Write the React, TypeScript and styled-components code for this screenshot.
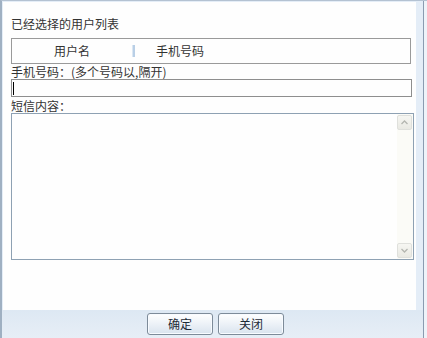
import React from "react";
import styled, { createGlobalStyle } from "styled-components";

const Global = createGlobalStyle`
  html, body { margin: 0; padding: 0; background: #ffffff; }
  body { font-family: "Noto Sans CJK SC", "Noto Sans", sans-serif; font-size: 12px; color: #333; }
`;

const Frame = styled.div`
  width: 427px;
  height: 338px;
  box-sizing: border-box;
  background: #e4edf7;
  border-top: 1px solid #b4c2d2;
  border-left: 2px solid #9fb0c2;
  box-shadow: inset -3px 0 0 #eef3f9, inset -4px 0 0 #8a9bb0;
  display: flex;
  flex-direction: column;
`;

const Content = styled.div`
  margin: 1px 11px 0 1px;
  height: 308px;
  background: #fefefe;
  box-sizing: border-box;
  padding: 14px 0 0 8px;
  display: flex;
  flex-direction: column;
`;

const Label = styled.div<{ $h?: number }>`
  height: ${(p) => p.$h ?? 15}px;
  line-height: ${(p) => p.$h ?? 15}px;
  font-size: 12px;
  color: #333;
  white-space: nowrap;
`;

const ListBox = styled.div`
  margin-top: 6px;
  width: 400px;
  height: 26px;
  box-sizing: border-box;
  border: 1px solid #9a9a9a;
  display: flex;
  align-items: center;
`;

const HeadCell = styled.div<{ $w: number; $align: string; $pad?: number }>`
  width: ${(p) => p.$w}px;
  text-align: ${(p) => p.$align};
  padding-left: ${(p) => p.$pad ?? 0}px;
  box-sizing: border-box;
  line-height: 16px;
  color: #333;
`;

const Sep = styled.div`
  width: 2px;
  height: 12px;
  background: #b9cfe6;
  border-left: 1px solid #dbe7f3;
`;

const Input = styled.div`
  width: 401px;
  height: 18px;
  box-sizing: border-box;
  border: 1px solid #8e8e8e;
  padding: 2px 0 0 1px;
  margin-bottom: 1px;
`;

const Caret = styled.div`
  width: 1px;
  height: 13px;
  background: #000;
`;

const TextBox = styled.div`
  width: 403px;
  height: 147px;
  box-sizing: border-box;
  border: 1px solid #8ea1b3;
  display: flex;
`;

const Area = styled.textarea`
  flex: 1;
  border: none;
  outline: none;
  resize: none;
  overflow: hidden;
  background: #fefefe;
  font-family: inherit;
  font-size: 12px;
  padding: 2px;
`;

const Scroll = styled.div`
  width: 16px;
  background: #fbfbf7;
  display: flex;
  flex-direction: column;
  justify-content: space-between;
  padding: 1px 1px 1px 0;
  box-sizing: border-box;
`;

const ScrollBtn = styled.div`
  height: 15px;
  box-sizing: border-box;
  border: 1px solid #dfe0dc;
  border-radius: 2px;
  background: linear-gradient(#f6f6f2, #e9e9e3);
  display: flex;
  align-items: center;
  justify-content: center;
`;

const Footer = styled.div`
  flex: 1;
  background: linear-gradient(#dde8f3, #e7eef6);
  margin-right: 4px;
  display: flex;
  justify-content: center;
  align-items: flex-start;
  padding-top: 3px;
  padding-left: 6px;
  gap: 5px;
`;

const Button = styled.button`
  width: 66px;
  height: 22px;
  box-sizing: border-box;
  border: 1px solid #7d8b99;
  border-radius: 3px;
  background: linear-gradient(#ffffff, #eef3f8 45%, #d9e3ee);
  box-shadow: inset 0 0 0 1px #f8fbff;
  font-family: "Noto Sans CJK SC", sans-serif;
  font-size: 12px;
  color: #1e2a36;
  padding: 0;
  line-height: 18px;
`;

const Chevron = ({ up }: { up?: boolean }) => (
  <svg width="7" height="5" viewBox="0 0 7 5">
    <path
      d={up ? "M0.5 4 L3.5 1 L6.5 4" : "M0.5 1 L3.5 4 L6.5 1"}
      fill="none"
      stroke="#b4b6b0"
      strokeWidth="1.3"
    />
  </svg>
);

export default function App() {
  return (
    <>
      <Global />
      <Frame>
        <Content>
          <Label $h={16}>已经选择的用户列表</Label>
          <ListBox>
            <HeadCell $w={120} $align="center">用户名</HeadCell>
            <Sep />
            <HeadCell $w={200} $align="left" $pad={21}>手机号码</HeadCell>
          </ListBox>
          <Label $h={15}>手机号码：(多个号码以,隔开)</Label>
          <Input>
            <Caret />
          </Input>
          <Label $h={15}>短信内容：</Label>
          <TextBox>
            <Area />
            <Scroll>
              <ScrollBtn>
                <Chevron up />
              </ScrollBtn>
              <ScrollBtn>
                <Chevron />
              </ScrollBtn>
            </Scroll>
          </TextBox>
        </Content>
        <Footer>
          <Button>确定</Button>
          <Button>关闭</Button>
        </Footer>
      </Frame>
    </>
  );
}
